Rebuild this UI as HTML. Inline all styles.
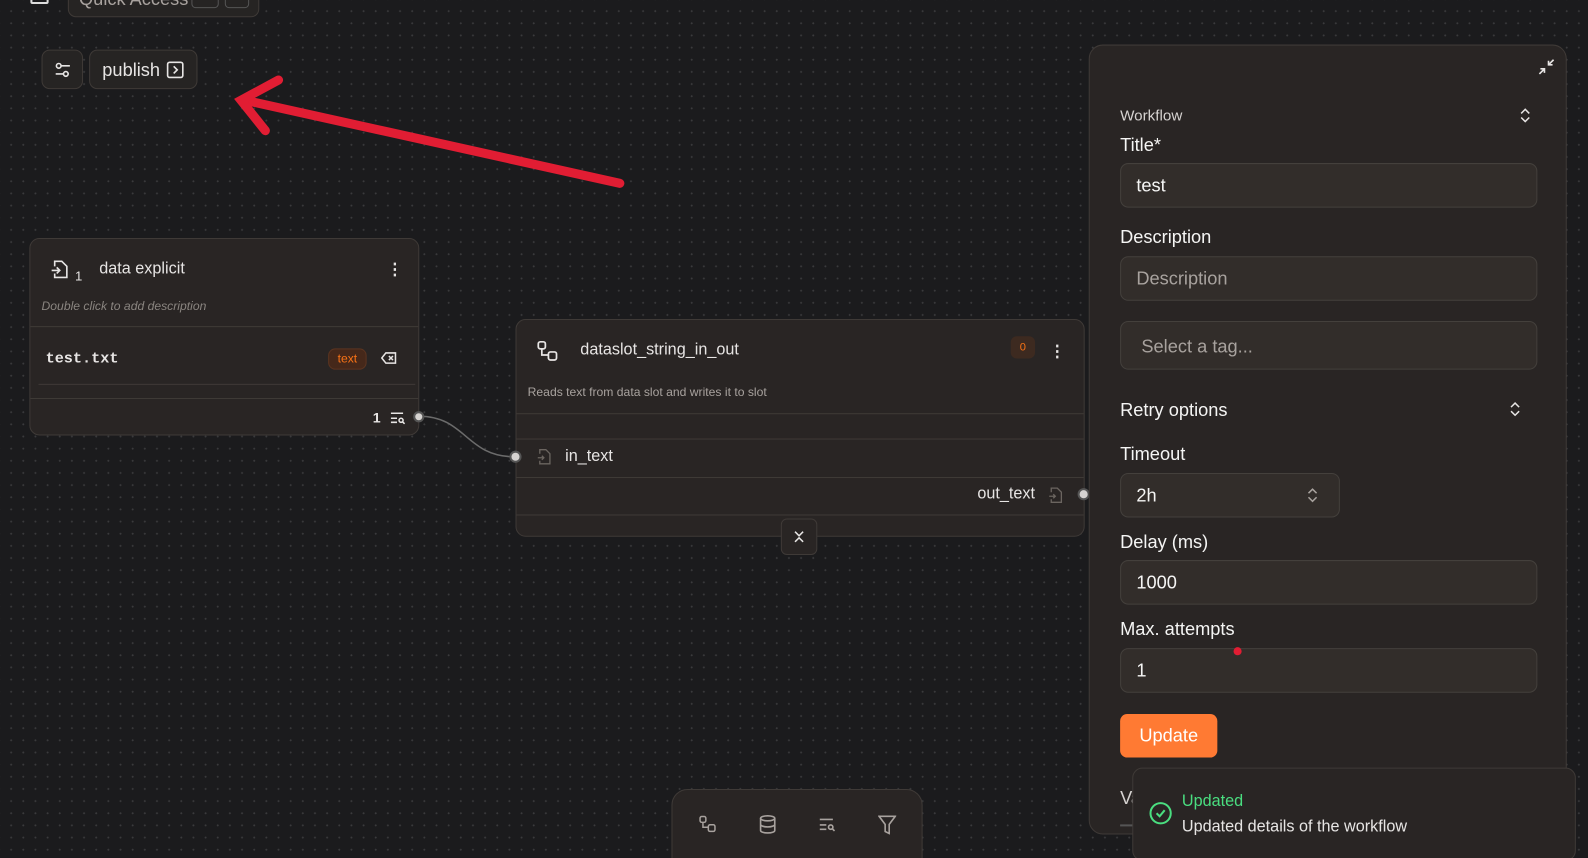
<!DOCTYPE html>
<html><head><meta charset="utf-8"><style>
*{box-sizing:border-box;margin:0;padding:0}
html,body{width:1588px;height:858px;overflow:hidden;background:#1b1b1d}
#w{width:1568px;height:847px;position:relative;transform:scale(1.01276);transform-origin:0 0;background:#1b1b1d;background-image:radial-gradient(circle,#3a3a3c 0.9px,transparent 1.1px);background-size:12px 12px;background-position:5px 5px;font-family:"Liberation Sans",sans-serif;color:#e7e5e4}
.abs{position:absolute}
.card{background:#292524;border:1px solid #3f3a37}
.inp{position:absolute;left:30px;width:412px;height:44px;background:#322d2a;border:1px solid #44403c;border-radius:8px;font-size:18px;padding:11px 15px;color:#f5f5f4}
.lbl{position:absolute;left:30px;font-size:18px;color:#f5f5f4}
svg{display:block}
</style></head><body><div id="w">
<div class="abs" style="left:30px;top:-8px;width:18px;height:12px;border:2px solid #ddd;border-radius:2px"></div>
<div class="abs card" style="left:67px;top:-20px;width:189px;height:37px;border-radius:8px;background:#262423">
<span class="abs" style="left:10px;top:8px;font-size:18px;color:#a8a29e">Quick Access</span>
<div class="abs" style="left:121px;top:5px;width:27px;height:22px;border:1px solid #555;border-radius:4px"></div>
<div class="abs" style="left:154px;top:5px;width:24px;height:22px;border:1px solid #555;border-radius:4px"></div>
</div>
<div class="abs card" style="left:41px;top:49px;width:41px;height:39px;border-radius:8px;background:#262423">
<svg class="abs" style="left:11px;top:10px" width="18" height="18" viewBox="0 0 18 18" fill="none" stroke="#e7e5e4" stroke-width="1.6"><circle cx="5" cy="5" r="2.3"/><line x1="7.5" y1="5" x2="16" y2="5"/><circle cx="12" cy="13" r="2.3"/><line x1="2" y1="13" x2="9.5" y2="13"/></svg>
</div>
<div class="abs card" style="left:88px;top:49px;width:107px;height:39px;border-radius:8px;background:#262423">
<span class="abs" style="left:12px;top:9px;font-size:18px">publish</span>
<svg class="abs" style="left:75px;top:10px" width="18" height="18" viewBox="0 0 18 18" fill="none" stroke="#e7e5e4" stroke-width="1.6"><rect x="1.5" y="1.5" width="15" height="15" rx="2"/><path d="M7.5 5.5l3.5 3.5-3.5 3.5"/></svg>
</div>
<svg class="abs" style="left:0;top:0" width="700" height="200"><g stroke="#e11d33" stroke-width="9" stroke-linecap="round" fill="none"><line x1="612" y1="181" x2="242" y2="99"/><path d="M275 79L238 99 262 129"/></g></svg>
<svg class="abs" style="left:0;top:0" width="600" height="500"><path d="M414 411 C460 411 460 451 508 451" stroke="#6b6b6b" stroke-width="1.5" fill="none"/></svg>
<div class="abs card" style="left:29px;top:235px;width:385px;height:195px;border-radius:10px">
<svg class="abs" style="left:20px;top:20px" width="18" height="20" viewBox="0 0 18 20" fill="none" stroke="#e7e5e4" stroke-width="1.6"><path d="M4 7V2h7l5 5v11H4v-4"/><path d="M1 11h8M6 8l3 3-3 3"/></svg>
<span class="abs" style="left:44px;top:29px;font-size:13px">1</span>
<span class="abs" style="left:68px;top:21px;font-size:16px">data explicit</span>
<span class="abs" style="left:352px;top:20px;font-size:16px;font-weight:bold">⋮</span>
<span class="abs" style="left:11px;top:59px;font-size:12px;font-style:italic;color:#8a8580">Double click to add description</span>
<div class="abs" style="left:0;top:86px;width:100%;border-top:1px solid #3f3a37"></div>
<span class="abs" style="left:15px;top:110px;font-size:15px;font-family:'Liberation Mono',monospace;font-weight:bold;color:#e7e5e4">test.txt</span>
<span class="abs" style="left:294px;top:108px;width:38px;height:21px;border-radius:7px;background:#45281a;border:1px solid #5b3420;color:#f97316;font-size:12px;text-align:center;line-height:19px">text</span>
<svg class="abs" style="left:346px;top:111px" width="16" height="13" viewBox="0 0 16 13" fill="none" stroke="#e7e5e4" stroke-width="1.5"><path d="M5 1.5h9.5v10H5L1 6.5z"/><path d="M8 4.5l4 4M12 4.5l-4 4"/></svg>
<div class="abs" style="left:8px;top:143px;width:372px;border-top:1px solid #3f3a37"></div>
<div class="abs" style="left:0;top:157px;width:100%;border-top:1px solid #3f3a37"></div>
<span class="abs" style="left:338px;top:168px;font-size:14px;font-weight:bold">1</span>
<svg class="abs" style="left:355px;top:170px" width="16" height="13" viewBox="0 0 16 13" fill="none" stroke="#e7e5e4" stroke-width="1.5"><path d="M1 2h12M1 7h6M1 11h6"/><circle cx="11" cy="9" r="2"/><path d="M12.5 10.5l2 2"/></svg>
</div>
<div class="abs" style="left:408px;top:406px;width:11px;height:11px;border-radius:50%;background:#d6d3d1;border:2px solid #555"></div>
<div class="abs card" style="left:509px;top:315px;width:562px;height:215px;border-radius:10px">
<svg class="abs" style="left:20px;top:20px" width="22" height="22" viewBox="0 0 22 22" fill="none" stroke="#e7e5e4" stroke-width="1.7"><rect x="1.5" y="1.5" width="7" height="7" rx="2"/><rect x="11.5" y="11.5" width="8" height="8" rx="2"/><path d="M5 8.5v6h6.5"/></svg>
<span class="abs" style="left:63px;top:21px;font-size:16px">dataslot_string_in_out</span>
<span class="abs" style="left:488px;top:16px;width:24px;height:22px;border-radius:6px;background:#3d2a20;color:#f97316;font-size:11px;text-align:center;line-height:22px">0</span>
<span class="abs" style="left:526px;top:21px;font-size:16px;font-weight:bold">⋮</span>
<span class="abs" style="left:11px;top:64px;font-size:12px;color:#a8a29e">Reads text from data slot and writes it to slot</span>
<div class="abs" style="left:0;top:92px;width:100%;border-top:1px solid #3f3a37"></div>
<div class="abs" style="left:0;top:117px;width:100%;border-top:1px solid #3f3a37"></div>
<svg class="abs" style="left:20px;top:127px" width="14" height="16" viewBox="0 0 14 16" fill="none" stroke="#6b6560" stroke-width="1.3"><path d="M3 5V1h6l4 4v10H3v-3"/><path d="M1 9h6M5 7l2 2-2 2"/></svg>
<span class="abs" style="left:48px;top:126px;font-size:16px">in_text</span>
<div class="abs" style="left:0;top:155px;width:100%;border-top:1px solid #3f3a37"></div>
<span class="abs" style="left:455px;top:163px;font-size:16px">out_text</span>
<svg class="abs" style="left:525px;top:165px" width="14" height="16" viewBox="0 0 14 16" fill="none" stroke="#6b6560" stroke-width="1.3"><path d="M3 5V1h6l4 4v10H3v-3"/><path d="M1 9h6M5 7l2 2-2 2"/></svg>
<div class="abs" style="left:0;top:192px;width:100%;border-top:1px solid #3f3a37"></div>
</div>
<div class="abs" style="left:503px;top:445px;width:12px;height:12px;border-radius:50%;background:#d6d3d1;border:2px solid #555"></div>
<div class="abs" style="left:1064px;top:482px;width:12px;height:12px;border-radius:50%;background:#d6d3d1;border:2px solid #555"></div>
<div class="abs card" style="left:771px;top:512px;width:36px;height:36px;border-radius:6px">
<svg class="abs" style="left:11px;top:10px" width="12" height="14" viewBox="0 0 12 14" fill="none" stroke="#e7e5e4" stroke-width="1.5"><path d="M2 2l4 4 4-4M2 12l4-4 4 4"/></svg>
</div>
<div class="abs card" style="left:1075px;top:44px;width:472px;height:780px;border-radius:14px">
<svg class="abs" style="left:442px;top:12px" width="18" height="18" viewBox="0 0 18 18" fill="none" stroke="#e7e5e4" stroke-width="1.6"><path d="M16 2l-5 5M11 3v4h4M2 16l5-5M7 15v-4H3"/></svg>
<span class="abs" style="left:30px;top:61px;font-size:15px;color:#d6d3d1">Workflow</span>
<svg class="abs" style="left:424px;top:61px" width="12" height="16" viewBox="0 0 12 16" fill="none" stroke="#e7e5e4" stroke-width="1.5"><path d="M2 6l4-4 4 4M2 10l4 4 4-4"/></svg>
<span class="lbl" style="top:88px">Title*</span>
<div class="inp" style="top:116px">test</div>
<span class="lbl" style="top:179px">Description</span>
<div class="inp" style="top:208px;color:#a8a29e">Description</div>
<div class="inp" style="top:272px;height:48px;color:#a8a29e;padding-left:20px;padding-top:14px">Select a tag...</div>
<span class="lbl" style="top:350px">Retry options</span>
<svg class="abs" style="left:414px;top:351px" width="12" height="16" viewBox="0 0 12 16" fill="none" stroke="#e7e5e4" stroke-width="1.5"><path d="M2 6l4-4 4 4M2 10l4 4 4-4"/></svg>
<span class="lbl" style="top:393px">Timeout</span>
<div class="inp" style="top:422px;width:217px">2h
<svg class="abs" style="left:183px;top:13px" width="12" height="16" viewBox="0 0 12 16" fill="none" stroke="#a8a29e" stroke-width="1.5"><path d="M2 6l4-4 4 4M2 10l4 4 4-4"/></svg></div>
<span class="lbl" style="top:480px">Delay (ms)</span>
<div class="inp" style="top:508px">1000</div>
<span class="lbl" style="top:566px">Max. attempts</span>
<div class="inp" style="top:595px">1</div>
<div class="abs" style="left:142px;top:594px;width:8px;height:8px;border-radius:50%;background:#e11d33"></div>
<div class="abs" style="left:30px;top:660px;width:96px;height:43px;border-radius:7px;background:#ff7a33;color:#fff;font-size:18px;text-align:center;line-height:43px">Update</div>
<span class="lbl" style="top:733px;color:#d6d3d1">Va</span>
<div class="abs" style="left:30px;top:769px;width:20px;border-top:2px solid #555"></div>
</div>
<div class="abs card" style="left:1118px;top:758px;width:438px;height:92px;border-radius:10px">
<svg class="abs" style="left:15px;top:32px" width="24" height="24" viewBox="0 0 24 24" fill="none" stroke="#4ade80" stroke-width="2"><circle cx="12" cy="12" r="10"/><path d="M8 12l3 3 5-6"/></svg>
<span class="abs" style="left:48px;top:24px;font-size:16px;color:#4ade80">Updated</span>
<span class="abs" style="left:48px;top:49px;font-size:16px;color:#e7e5e4">Updated details of the workflow</span>
</div>
<div class="abs card" style="left:663px;top:779px;width:248px;height:90px;border-radius:16px">
<svg class="abs" style="left:26px;top:25px" width="18" height="18" viewBox="0 0 22 22" fill="none" stroke="#a8a29e" stroke-width="1.8"><rect x="1.5" y="1.5" width="7" height="7" rx="2"/><rect x="11.5" y="11.5" width="8" height="8" rx="2"/><path d="M5 8.5v6h6.5"/></svg>
<svg class="abs" style="left:85px;top:24px" width="18" height="20" viewBox="0 0 18 20" fill="none" stroke="#a8a29e" stroke-width="1.6"><ellipse cx="9" cy="4" rx="7" ry="2.5"/><path d="M2 4v12c0 1.4 3 2.5 7 2.5s7-1.1 7-2.5V4M2 10c0 1.4 3 2.5 7 2.5s7-1.1 7-2.5"/></svg>
<svg class="abs" style="left:144px;top:27px" width="18" height="14" viewBox="0 0 16 13" fill="none" stroke="#a8a29e" stroke-width="1.5"><path d="M1 2h12M1 7h6M1 11h6"/><circle cx="11" cy="9" r="2"/><path d="M12.5 10.5l2 2"/></svg>
<svg class="abs" style="left:203px;top:25px" width="18" height="19" viewBox="0 0 18 19" fill="none" stroke="#a8a29e" stroke-width="1.6"><path d="M1 1h16l-6 8v9l-4-2V9z"/></svg>
</div>
</div></body></html>
